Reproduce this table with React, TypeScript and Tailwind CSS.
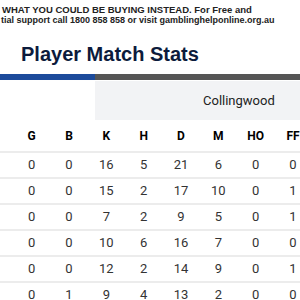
import React from "react";

const headers = ["G", "B", "K", "H", "D", "M", "HO", "FF"];

const rows = [
  [0, 0, 16, 5, 21, 6, 0, 0],
  [0, 0, 15, 2, 17, 10, 0, 1],
  [0, 0, 7, 2, 9, 5, 0, 1],
  [0, 0, 10, 6, 16, 7, 0, 0],
  [0, 0, 12, 2, 14, 9, 0, 1],
  [0, 1, 9, 4, 13, 2, 0, 0],
];

const App = () => {
  return (
    <div className="w-[300px] h-[300px] overflow-hidden bg-white">
      {/* Gambling disclaimer */}
      <div className="pt-[5px] leading-[10px] font-bold text-[#222] whitespace-nowrap font-['Liberation_Sans_Narrow','Arial_Narrow',sans-serif]">
        <p className="pl-[2px] text-[9.5px]">WHAT YOU COULD BE BUYING INSTEAD. For Free and</p>
        <p className="pl-[1px] text-[9px]">tial support call 1800 858 858 or visit gamblinghelponline.org.au</p>
      </div>

      {/* Title */}
      <h1 className="mt-[17px] pl-[21px] text-[20px] leading-[24px] font-bold text-[#0c1b3c] font-['Liberation_Sans_Narrow','Arial_Narrow',sans-serif]">
        Player Match Stats
      </h1>

      {/* Team colour bar */}
      <div className="mt-[8px] flex h-[6px]">
        <div className="w-[95px] bg-[#1d4b9b]" />
        <div className="flex-1 bg-[#555555]" />
      </div>

      {/* Team header */}
      <div className="mt-[1px] flex h-[39px] font-['Roboto',sans-serif]">
        <div className="w-[95px] bg-white" />
        <div className="flex-1 flex items-center bg-[#f2f3f5] pl-[108px] text-[13px] text-[#222]">
          Collingwood
        </div>
      </div>

      {/* Stats table */}
      <div className="font-['Roboto',sans-serif]">
        <div className="grid grid-cols-[13px_repeat(8,37.33px)] h-[33px] items-center border-b-2 border-[#ececec] text-[12px] font-bold text-black">
          <div />
          {headers.map((h) => (
            <div key={h} className="text-center">
              {h}
            </div>
          ))}
        </div>
        {rows.map((row, i) => (
          <div
            key={i}
            className="grid grid-cols-[13px_repeat(8,37.33px)] h-[26px] items-center border-b-2 border-[#ececec] text-[13px] text-[#333]"
          >
            <div />
            {row.map((v, j) => (
              <div key={j} className="text-center">
                {v}
              </div>
            ))}
          </div>
        ))}
      </div>
    </div>
  );
};

export default App;
